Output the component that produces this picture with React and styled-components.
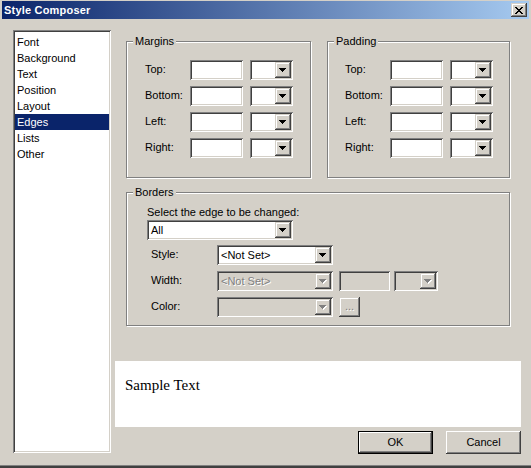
import styled, { createGlobalStyle } from "styled-components";

const GlobalStyle = createGlobalStyle`
  html, body {
    margin: 0;
    padding: 0;
    background: #d4d0c8;
  }
  body {
    font-family: "Liberation Sans", Arial, sans-serif;
    font-size: 11px;
    color: #000;
  }
  * {
    box-sizing: border-box;
  }
`;

const sunken = `
  box-shadow: inset 1px 1px #808080, inset -1px -1px #fff,
    inset 2px 2px #404040, inset -2px -2px #d4d0c8;
`;
const raised = `
  box-shadow: inset -1px -1px #404040, inset 1px 1px #d4d0c8,
    inset -2px -2px #808080, inset 2px 2px #fff;
`;

const Window = styled.div`
  width: 531px;
  height: 468px;
  background: #d4d0c8;
  box-shadow: inset 0 -2px #404040, inset 0 -3px #808080;
  overflow: hidden;
`;

const TitleBar = styled.div`
  height: 18px;
  margin: 1px 2px 0;
  padding: 0 2px 0 2px;
  display: flex;
  align-items: center;
  justify-content: space-between;
  background: linear-gradient(to right, #0a246a, #a6caf0);
`;

const TitleText = styled.span`
  color: #fff;
  font-weight: bold;
  font-size: 11px;
  letter-spacing: 0.2px;
`;

const CloseButton = styled.div`
  width: 16px;
  height: 14px;
  background: #d4d0c8;
  ${raised}
  display: flex;
  align-items: center;
  justify-content: center;
`;

const Main = styled.div`
  display: flex;
  align-items: flex-start;
  padding: 11px 0 0 13px;
`;

const ListBox = styled.div`
  width: 98px;
  height: 423px;
  background: #fff;
  ${sunken}
  padding: 4px 2px 2px;
`;

const ListItem = styled.div`
  height: 16px;
  line-height: 16px;
  padding-left: 2px;
  background: ${(p) => (p.$selected ? "#0a246a" : "transparent")};
  color: ${(p) => (p.$selected ? "#fff" : "#000")};
`;

const Column = styled.div`
  margin-left: 4px;
  width: 406px;
  display: flex;
  flex-direction: column;
`;

const GroupRow = styled.div`
  display: flex;
  gap: 16px;
  padding: 0 11px;
  margin-top: 11px;
`;

const GroupBox = styled.div`
  width: ${(p) => p.$width}px;
  margin: ${(p) => p.$margin || "0"};
  border: 1px solid #808080;
  box-shadow: inset 1px 1px #fff, 1px 1px #fff;
  display: flex;
  flex-direction: column;
`;

const Caption = styled.span`
  align-self: flex-start;
  margin: -7px 0 0 6px;
  padding: 0 2px;
  line-height: 13px;
  background: #d4d0c8;
`;

const GroupBody = styled.div`
  padding: ${(p) => p.$pad};
  display: flex;
  flex-direction: column;
  gap: 6px;
`;

const Row = styled.div`
  display: flex;
  align-items: center;
  height: 20px;
`;

const Label = styled.span`
  width: ${(p) => p.$width}px;
  flex: none;
  line-height: 13px;
  padding-bottom: 1px;
`;

const TextBox = styled.div`
  width: ${(p) => p.$width}px;
  height: 20px;
  flex: none;
  margin-left: ${(p) => p.$ml || 0}px;
  background: ${(p) => (p.$disabled ? "#d4d0c8" : "#fff")};
  ${sunken}
`;

const SelectBox = styled.div`
  width: ${(p) => p.$width}px;
  height: 20px;
  flex: none;
  margin-left: ${(p) => p.$ml || 0}px;
  padding: 2px;
  display: flex;
  align-items: center;
  background: ${(p) => (p.$disabled ? "#d4d0c8" : "#fff")};
  ${sunken}
`;

const SelectValue = styled.span`
  flex: 1;
  padding-left: ${(p) => p.$pl}px;
  line-height: 13px;
  white-space: nowrap;
  overflow: hidden;
  color: ${(p) => (p.$disabled ? "#808080" : "#000")};
  text-shadow: ${(p) => (p.$disabled ? "1px 1px #fff" : "none")};
`;

const ArrowButton = styled.div`
  width: 16px;
  height: 16px;
  flex: none;
  background: #d4d0c8;
  ${raised}
  display: flex;
  align-items: center;
  justify-content: center;
  padding-top: 1px;
`;

const EdgeLabel = styled.div`
  line-height: 13px;
  margin-bottom: 1px;
`;

const BorderRows = styled.div`
  display: flex;
  flex-direction: column;
  gap: 6px;
  padding-left: 4px;
  margin-top: -1px;
`;

const EllipsisButton = styled.div`
  width: 21px;
  height: 20px;
  margin-left: 6px;
  background: #d4d0c8;
  ${raised}
  display: flex;
  align-items: center;
  justify-content: center;
  color: #808080;
  text-shadow: 1px 1px #fff;
  line-height: 13px;
  padding-bottom: 1px;
`;

const Preview = styled.div`
  margin-top: 35px;
  height: 66px;
  background: #fff;
  padding: 15px 0 0 10px;
  font-family: "Liberation Serif", "Times New Roman", serif;
  font-size: 15px;
  line-height: 18px;
`;

const ButtonRow = styled.div`
  margin-top: 4px;
  display: flex;
  justify-content: flex-end;
  gap: 13px;
`;

const PushButton = styled.div`
  width: 75px;
  height: 23px;
  background: #d4d0c8;
  display: flex;
  align-items: center;
  justify-content: center;
  line-height: 13px;
  border: ${(p) => (p.$default ? "1px solid #000" : "none")};
  box-shadow: inset -1px -1px #404040, inset 1px 1px #fff,
    inset -2px -2px #808080;
`;

const Arrow = ({ disabled }) => (
  <svg width="8" height="5" viewBox="0 0 8 5" shapeRendering="crispEdges">
    {disabled && (
      <path
        d="M1 1h7v1H1zM2 2h5v1H2zM3 3h3v1H3zM4 4h1v1H4z"
        fill="#fff"
      />
    )}
    <path
      d="M0 0h7v1H0zM1 1h5v1H1zM2 2h3v1H2zM3 3h1v1H3z"
      fill={disabled ? "#808080" : "#000"}
    />
  </svg>
);

const CloseGlyph = () => (
  <svg width="8" height="7" viewBox="0 0 8 7" shapeRendering="crispEdges">
    <path
      d="M0 0h2v1H0zM6 0h2v1H6zM1 1h2v1H1zM5 1h2v1H5zM2 2h4v1H2zM3 3h2v1H3zM2 4h4v1H2zM1 5h2v1H1zM5 5h2v1H5zM0 6h2v1H0zM6 6h2v1H6z"
      fill="#000"
    />
  </svg>
);

const Select = ({ width, value, disabled, ml, pl = 1 }) => (
  <SelectBox $width={width} $disabled={disabled} $ml={ml}>
    <SelectValue $disabled={disabled} $pl={pl}>
      {value}
    </SelectValue>
    <ArrowButton>
      <Arrow disabled={disabled} />
    </ArrowButton>
  </SelectBox>
);

const categories = [
  "Font",
  "Background",
  "Text",
  "Position",
  "Layout",
  "Edges",
  "Lists",
  "Other",
];

const sides = ["Top:", "Bottom:", "Left:", "Right:"];

const SideGroup = ({ title, width, left }) => (
  <GroupBox $width={width}>
    <Caption>{title}</Caption>
    <GroupBody $pad={`12px 0 19px ${left}px`}>
      {sides.map((side) => (
        <Row key={side}>
          <Label $width={45}>{side}</Label>
          <TextBox $width={53} />
          <Select width={43} ml={7} />
        </Row>
      ))}
    </GroupBody>
  </GroupBox>
);

export default function App() {
  return (
    <>
      <GlobalStyle />
      <Window>
        <TitleBar>
          <TitleText>Style Composer</TitleText>
          <CloseButton>
            <CloseGlyph />
          </CloseButton>
        </TitleBar>
        <Main>
          <ListBox>
            {categories.map((c) => (
              <ListItem key={c} $selected={c === "Edges"}>
                {c}
              </ListItem>
            ))}
          </ListBox>
          <Column>
            <GroupRow>
              <SideGroup title="Margins" width={185} left={18} />
              <SideGroup title="Padding" width={183} left={17} />
            </GroupRow>
            <GroupBox $width={384} $margin="14px 0 0 11px">
              <Caption>Borders</Caption>
              <GroupBody $pad="7px 0 8px 20px">
                <div>
                  <EdgeLabel>Select the edge to be changed:</EdgeLabel>
                  <Select width={146} value="All" pl={2} />
                </div>
                <BorderRows>
                  <Row>
                    <Label $width={66}>Style:</Label>
                    <Select width={116} value="<Not Set>" pl={2} />
                  </Row>
                  <Row>
                    <Label $width={66}>Width:</Label>
                    <Select width={116} value="<Not Set>" pl={2} disabled />
                    <TextBox $width={51} $ml={6} $disabled />
                    <Select width={44} ml={4} disabled />
                  </Row>
                  <Row>
                    <Label $width={66}>Color:</Label>
                    <Select width={116} disabled />
                    <EllipsisButton>...</EllipsisButton>
                  </Row>
                </BorderRows>
              </GroupBody>
            </GroupBox>
            <Preview>Sample Text</Preview>
            <ButtonRow>
              <PushButton $default>OK</PushButton>
              <PushButton>Cancel</PushButton>
            </ButtonRow>
          </Column>
        </Main>
      </Window>
    </>
  );
}
